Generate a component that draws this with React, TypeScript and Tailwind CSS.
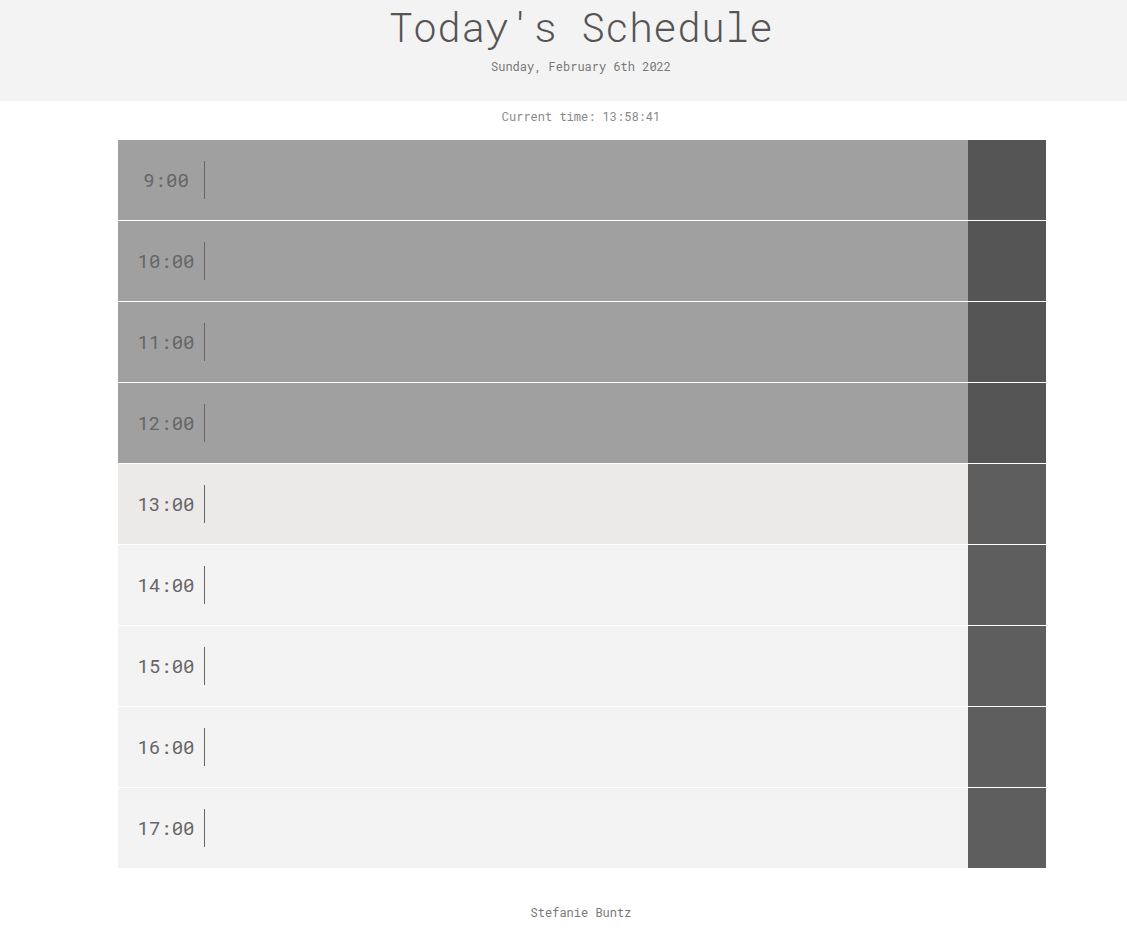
import React from "react";

const hours = [9, 10, 11, 12, 13, 14, 15, 16, 17];
const currentHour = 13;

const App = () => {
  return (
    <div className="min-h-[932px] bg-white overflow-hidden font-['Roboto_Mono','Liberation_Mono',monospace]">
      <div className="w-[1162px]">
        <header className="bg-[#f3f3f3] h-[101px] text-center pt-[4px]">
          <h1 className="text-[40px] leading-[46px] text-[#555] font-light">Today's Schedule</h1>
          <p className="text-[12px] leading-[16px] mt-[8px] text-[#777]">Sunday, February 6th 2022</p>
        </header>
        <p className="text-center text-[12px] leading-[16px] text-[#888] mt-[7px]">Current time: 13:58:41</p>
        <div className="ml-[118px] mt-[16px] w-[928px]">
          {hours.map((h) => {
            const past = h < currentHour;
            const present = h === currentHour;
            const rowBg = past ? "bg-[#a0a0a0]" : present ? "bg-[#ebeae8]" : "bg-[#f3f3f3]";
            const btnBg = past ? "bg-[#545554]" : "bg-[#5d5e5d]";
            return (
              <div key={h} className="flex h-[81px] border-b border-white">
                <div className={`flex flex-1 items-center ${rowBg}`}>
                  <div className="w-[87px] pl-[10px] h-[38px] flex items-center justify-center border-r border-[#666] text-[19px] text-[#666]">
                    {h}:00
                  </div>
                  <div className="flex-1" />
                </div>
                <div className={`w-[78px] ${btnBg}`} />
              </div>
            );
          })}
        </div>
        <footer className="text-center text-[12px] leading-[16px] text-[#777] mt-[35px]">Stefanie Buntz</footer>
      </div>
    </div>
  );
};

export default App;
